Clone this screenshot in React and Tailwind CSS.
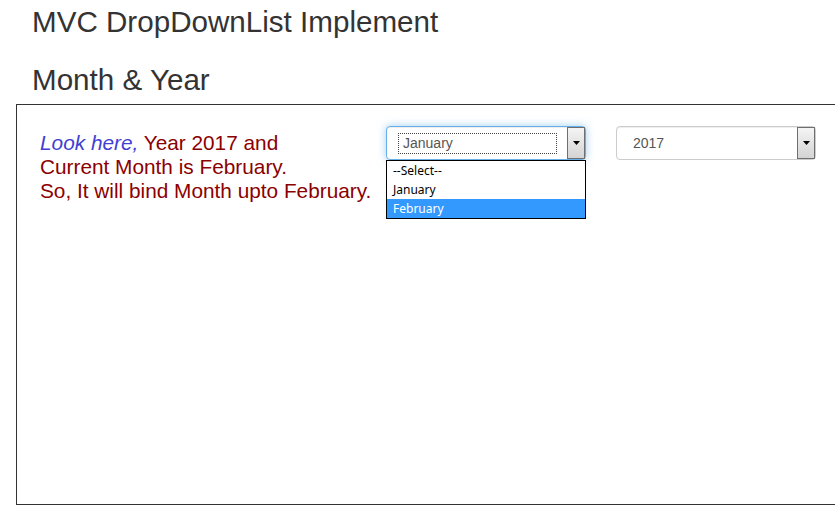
import React from "react";

function Arrow() {
  return (
    <div className="w-[18px] h-full border border-[#6f6f6f] bg-gradient-to-b from-[#f4f4f4] to-[#d4d4d4] flex items-center justify-center">
      <svg width="7" height="4" viewBox="0 0 7 4">
        <path d="M0 0 L7 0 L3.5 4 Z" fill="#000" />
      </svg>
    </div>
  );
}

export default function App() {
  return (
    <div className="w-[835px] h-[525px] overflow-hidden bg-white" style={{ fontFamily: '"Liberation Sans", Arial, sans-serif' }}>
      <div className="pl-[32px] pt-[5px]">
        <div className="text-[29.6px] leading-[33px] text-[#333]">MVC DropDownList Implement</div>
        <div className="text-[29.6px] leading-[33px] text-[#333] mt-[25px]">Month &amp; Year</div>
      </div>
      <div className="ml-[16px] mt-[8px] w-[840px] h-[401px] border border-[#333] flex items-start pl-[23px] pt-[21px]">
        <div className="w-[346px] mt-[5px] text-[20.8px] leading-[24px] text-[#8b0000] whitespace-nowrap">
          <span className="italic text-[#4040d4]">Look here,</span> Year 2017 and
          <br />
          Current Month is February.
          <br />
          So, It will bind Month upto February.
        </div>
        <div className="relative w-[200px]">
          <div className="h-[34px] border border-[#66afe9] rounded-[4px] shadow-[inset_0_1px_1px_rgba(0,0,0,0.075),0_0_8px_rgba(102,175,233,0.6)] flex items-stretch bg-white">
            <div className="flex-1 flex items-center pl-[11px] pr-[10px]">
              <div className="w-full h-[21px] border border-dotted border-[#444] flex items-center pl-[4px] text-[14px] text-[#555]">
                January
              </div>
            </div>
            <Arrow />
          </div>
          <div className="absolute left-0 top-[34px] w-[200px] border border-black bg-white text-[12px] text-black" style={{ fontFamily: '"Noto Sans", "DejaVu Sans", sans-serif' }}>
            <div className="h-[19px] leading-[19px] pl-[6px]">--Select--</div>
            <div className="h-[19px] leading-[19px] pl-[6px]">January</div>
            <div className="h-[19px] leading-[19px] pl-[6px] bg-[#3399ff] text-white">February</div>
          </div>
        </div>
        <div className="w-[200px] ml-[30px] h-[34px] border border-[#ccc] rounded-[4px] flex items-stretch bg-white shadow-[inset_0_1px_1px_rgba(0,0,0,0.075)]">
          <div className="flex-1 flex items-center pl-[16px] text-[14px] text-[#555]">2017</div>
          <Arrow />
        </div>
      </div>
    </div>
  );
}
